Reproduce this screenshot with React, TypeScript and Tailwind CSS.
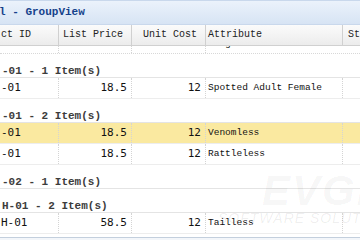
const mono = "font-['Liberation_Mono','DejaVu_Sans_Mono',monospace]";
const num = "font-['DejaVu_Sans_Mono','Liberation_Mono',monospace]";

type Row = { id: string; price: string; cost: string; attr: string; hl?: boolean };
type Item = { group: string } | Row;

const items: Item[] = [
  { group: "-01 - 1 Item(s)" },
  { id: "-01", price: "18.5", cost: "12", attr: "Spotted Adult Female" },
  { group: "-01 - 2 Item(s)" },
  { id: "-01", price: "18.5", cost: "12", attr: "Venomless", hl: true },
  { id: "-01", price: "18.5", cost: "12", attr: "Rattleless" },
  { group: "-02 - 1 Item(s)" },
  { group: "H-01 - 2 Item(s)" },
  { id: "H-01", price: "58.5", cost: "12", attr: "Tailless" },
];

const cell = "border-r border-dotted border-[#d4d4d4] h-full shrink-0";

function DataRow({ row }: { row: Row }) {
  return (
    <div
      className={`flex h-[21px] leading-[20px] border-b border-[#ededed] ${
        row.hl ? "bg-[#fae9a0]" : "bg-white"
      }`}
    >
      <div className={`${cell} w-[59px] pl-[1px] text-[11px] ${num} text-[#111]`}>{row.id}</div>
      <div className={`${cell} w-[73px] pr-[4px] text-right text-[11px] ${num} text-[#111]`}>
        {row.price}
      </div>
      <div className={`${cell} w-[74px] pr-[4px] text-right text-[11px] ${num} text-[#111]`}>
        {row.cost}
      </div>
      <div className={`${cell} w-[137px] pl-[2px] text-[9.5px] ${mono} text-[#111]`}>{row.attr}</div>
      <div className="flex-1" />
    </div>
  );
}

function GroupRow({ label }: { label: string }) {
  return (
    <div className="h-[24px] pt-[7px] leading-[14px] border-b border-[#e4e4e4] bg-white">
      <span className={`pl-[2px] text-[11px] font-bold ${mono} text-[#3c3c3c] whitespace-pre`}>
        {label}
      </span>
    </div>
  );
}

export default function App() {
  return (
    <div className="relative w-[360px] h-[240px] overflow-hidden bg-white">
      <div className="h-[25px] border-t border-[#c9d8ec] border-b border-[#99bbe8] bg-gradient-to-b from-[#ebf2fb] to-[#d7e4f4] flex items-center">
        <span className={`text-[11px] font-bold ${mono} text-[#15428b] whitespace-pre -ml-[1px]`}>
          l - GroupView
        </span>
      </div>

      <div className={`flex h-[21px] leading-[20px] border-b border-[#d0d0d0] bg-gradient-to-b from-[#fbfbfb] to-[#ececec] text-[10px] ${mono} text-[#222]`}>
        <div className="w-[59px] shrink-0 border-r border-[#d0d0d0] pl-[1px]">ct ID</div>
        <div className="w-[73px] shrink-0 border-r border-[#d0d0d0] pl-[4px]">List Price</div>
        <div className="w-[74px] shrink-0 border-r border-[#d0d0d0] pl-[11px]">Unit Cost</div>
        <div className="w-[137px] shrink-0 border-r border-[#d0d0d0] pl-[2px]">Attribute</div>
        <div className="flex-1 pl-[5px]">St</div>
      </div>

      <div className="flex h-[8px] overflow-hidden border-b border-dotted border-[#d8d8d8]">
        <div className={`${cell} w-[59px]`} />
        <div className={`${cell} w-[73px]`} />
        <div className={`${cell} w-[74px]`} />
        <div className={`${cell} w-[137px] pl-[2px] text-[9.5px] ${mono} text-[#111] leading-[20px] -mt-[12px] h-[20px]`}>
          Long
        </div>
        <div className="flex-1" />
      </div>

      {items.map((it, i) =>
        "group" in it ? <GroupRow key={i} label={it.group} /> : <DataRow key={i} row={it} />
      )}

      <div className="h-[3px]" />
      <div className="h-[20px] border-t border-[#c3cfdd] bg-[#f3f6fa]" />

      <div className="absolute left-[262px] top-[170px] pointer-events-none select-none">
        <div className="text-[42px] leading-[42px] font-black italic font-['Liberation_Sans',sans-serif] text-black/[0.045] tracking-[2px]">
          EVGEN
        </div>
        <div className="-ml-[44px] -mt-[2px] text-[14px] leading-[16px] italic font-['Liberation_Sans',sans-serif] text-black/[0.07] tracking-[1px] whitespace-nowrap">
          SOFTWARE SOLUTIONS
        </div>
      </div>
    </div>
  );
}
